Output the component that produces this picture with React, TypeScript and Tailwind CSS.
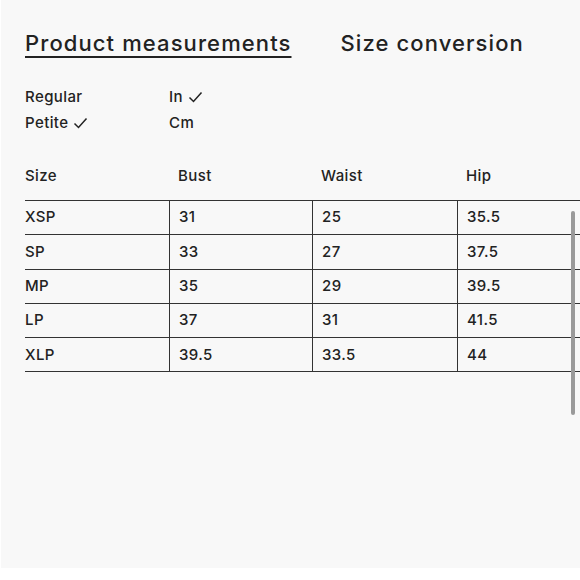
const rows = [
  ["XSP", "31", "25", "35.5"],
  ["SP", "33", "27", "37.5"],
  ["MP", "35", "29", "39.5"],
  ["LP", "37", "31", "41.5"],
  ["XLP", "39.5", "33.5", "44"],
];

function Check() {
  return (
    <svg width="15" height="12" viewBox="0 0 15 12" className="inline-block ml-[5px] -mt-[2px]">
      <path d="M1.5 6.5 L5.5 10.5 L13.5 1.5" fill="none" stroke="#222" strokeWidth="1.5" />
    </svg>
  );
}

export default function App() {
  return (
    <div className="w-[580px] h-[580px] bg-white overflow-hidden">
      <div
        className="relative w-[579px] h-[568px] ml-px bg-[#f8f8f8] text-[#222] font-medium overflow-hidden"
        style={{ fontFamily: 'Inter, "Liberation Sans", sans-serif' }}
      >
        <div className="flex pt-[29px] pl-[24px] text-[22px] leading-[28px] tracking-[1.1px]">
          <span className="underline underline-offset-[5px] decoration-[1.5px]">Product measurements</span>
          <span className="ml-[49px]">Size conversion</span>
        </div>

        <div className="grid grid-cols-[144px_144px] mt-[27px] pl-[24px] text-[15px] leading-[26px] tracking-[0.4px]">
          <div>Regular</div>
          <div>In<Check /></div>
          <div>Petite<Check /></div>
          <div>Cm</div>
        </div>

        <div className="mt-[27px] pl-[24px] text-[15px] tracking-[0.4px]">
          <div className="grid grid-cols-[144px_143px_145px_1fr] h-[26px] mb-[11px] items-center">
            <div>Size</div>
            <div className="pl-[9px]">Bust</div>
            <div className="pl-[9px]">Waist</div>
            <div className="pl-[9px]">Hip</div>
          </div>
          <div className="border-t-[1.5px] border-[#333]">
            {rows.map((r) => (
              <div key={r[0]} className="grid grid-cols-[144px_143px_145px_1fr] h-[34.3px] border-b-[1.5px] border-[#333]">
                <div className="flex items-center">{r[0]}</div>
                <div className="flex items-center pl-[9px] border-l-[1.5px] border-[#333]">{r[1]}</div>
                <div className="flex items-center pl-[9px] border-l-[1.5px] border-[#333]">{r[2]}</div>
                <div className="flex items-center pl-[9px] border-l-[1.5px] border-[#333]">{r[3]}</div>
              </div>
            ))}
          </div>
        </div>

        <div className="absolute left-[570px] top-[211px] w-[4px] h-[204px] rounded-full bg-[#9a9a9a]" />
      </div>
    </div>
  );
}
